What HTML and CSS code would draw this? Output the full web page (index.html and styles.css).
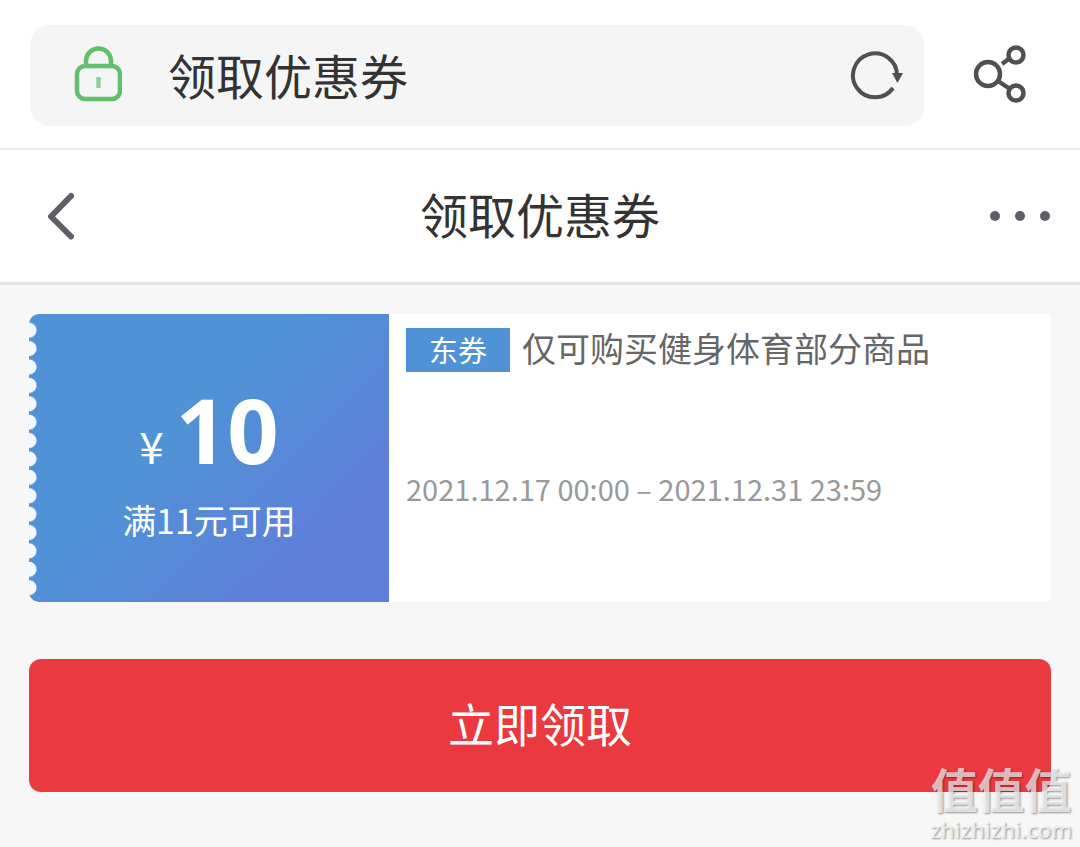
FILE: index.html
```html
<!DOCTYPE html>
<html lang="zh-CN">

<head>
    <meta charset="UTF-8">
    <meta name="viewport" content="width=device-width, initial-scale=1.0">
    <title>领取优惠券</title>
    <link rel="stylesheet" href="styles.css">
</head>

<body>
    <div class="browser-bar">
        <div class="address-box">
            <svg class="lock-icon" width="48" height="58" viewBox="0 0 48 58" fill="none" stroke="#62bf6c" stroke-width="4.5">
                <path d="M12 21V15a12.500 12.500 0 0 1 25 0v6" />
                <rect x="3" y="20" width="43" height="33" rx="8" />
                <path d="M24.500 31v11" stroke="#92cf98" />
            </svg>
            <input class="address-input" type="text" value="领取优惠券" aria-label="地址栏">
            <button class="icon-button" type="button" aria-label="刷新">
                <svg width="56" height="50" viewBox="0 0 56 50" fill="none" stroke="#505050" stroke-width="4">
                    <path d="M47 26A22 22 0 1 0 43 38" />
                    <path d="M42 23h11l-5.500 10z" fill="#505050" stroke="none" />
                </svg>
            </button>
        </div>
        <button class="icon-button share-button" type="button" aria-label="分享">
            <svg width="54" height="60" viewBox="0 0 54 60" fill="none" stroke="#505050" stroke-width="4.5">
                <circle cx="16" cy="30" r="12" />
                <circle cx="44" cy="11" r="7.500" />
                <circle cx="44" cy="49" r="7.500" />
                <path d="M30 20l8-6M26 37l12 8" />
            </svg>
        </button>
    </div>

    <header class="page-header">
        <button class="icon-button back-button" type="button" aria-label="返回">
            <svg width="30" height="50" viewBox="0 0 30 50" fill="none" stroke="#5f5f69" stroke-width="6" stroke-linecap="round" stroke-linejoin="round">
                <path d="M25 5L5 25.500l20 20" />
            </svg>
        </button>
        <h1 class="page-title">领取优惠券</h1>
        <button class="icon-button more-button" type="button" aria-label="更多">
            <svg width="62" height="12" viewBox="0 0 62 12" fill="#5f5f69">
                <circle cx="6" cy="6" r="5" />
                <circle cx="31" cy="6" r="5" />
                <circle cx="56" cy="6" r="5" />
            </svg>
        </button>
    </header>

    <main class="content">
        <section class="coupon">
            <div class="coupon-value">
                <p class="coupon-price"><span class="currency">¥</span><strong class="amount">10</strong></p>
                <p class="coupon-limit">满11元可用</p>
            </div>
            <div class="coupon-info">
                <div class="coupon-heading">
                    <span class="coupon-tag">东券</span>
                    <h2 class="coupon-title">仅可购买健身体育部分商品</h2>
                </div>
                <p class="coupon-date">2021.12.17 00:00 – 2021.12.31 23:59</p>
            </div>
        </section>

        <button class="receive-button" type="button">立即领取</button>
    </main>

    <div class="watermark">
        <span class="watermark-name">值值值</span>
        <span class="watermark-site">zhizhizhi.com</span>
    </div>
</body>

</html>
```

FILE: styles.css
```css
* {
    margin: 0;
    padding: 0;
    box-sizing: border-box;
}

body {
    position: relative;
    min-height: 100vh;
    background-color: #f7f7f7;
    color: #333;
    font-family: "Noto Sans CJK SC", sans-serif;
}

svg {
    display: block;
}

.icon-button {
    background: none;
    border: none;
    cursor: pointer;
}

.browser-bar {
    display: flex;
    align-items: center;
    gap: 48px;
    padding: 25px 54px 22px 30px;
    background-color: #fff;
    border-bottom: 2px solid #ececec;
}

.address-box {
    flex: 1;
    display: flex;
    align-items: center;
    min-width: 0;
    height: 101px;
    padding: 0 18px 2px 44px;
    background-color: #f5f5f5;
    border-radius: 20px;
}

.lock-icon {
    flex-shrink: 0;
}

.address-input {
    flex: 1;
    min-width: 0;
    margin-left: 46px;
    padding-bottom: 2px;
    background: none;
    border: none;
    outline: none;
    color: #333;
    font-family: inherit;
    font-size: 48px;
    line-height: 72px;
}

.share-button {
    padding-bottom: 4px;
}

.page-header {
    display: flex;
    align-items: center;
    justify-content: space-between;
    height: 135px;
    padding: 0 29px 0 46px;
    background-color: #fff;
    border-bottom: 3px solid #e2e2e2;
}

.back-button,
.more-button {
    flex: 1;
    display: flex;
}

.more-button {
    justify-content: flex-end;
}

.page-title {
    padding: 0 17px 6px 0;
    font-size: 48px;
    font-weight: 400;
    line-height: 72px;
}

.content {
    padding: 29px;
}

.coupon {
    display: flex;
    min-height: 288px;
    margin-bottom: 57px;
    background-color: #fff;
    border-radius: 10px 4px 4px 10px;
}

.coupon-value {
    position: relative;
    width: 360px;
    padding-top: 81px;
    background: linear-gradient(135deg, #5092d6 42%, #5f7fda 80%);
    border-radius: 10px 0 0 10px;
    color: #fff;
    text-align: center;
}

/* scalloped ticket edge */
.coupon-value::before {
    content: "";
    position: absolute;
    top: 7px;
    bottom: 5px;
    left: 0;
    width: 8px;
    background-image: radial-gradient(circle at 0 50%, #f3f8fc 7px, transparent 8px);
    background-size: 8px 18px;
    background-repeat: round;
}

.coupon-price {
    line-height: 68px;
}

.currency {
    margin-right: 12px;
    font-size: 44px;
}

.amount {
    font-family: "Noto Sans", sans-serif;
    font-size: 90px;
    font-weight: 700;
}

.coupon-limit {
    margin-top: 3px;
    font-size: 34px;
    line-height: 52px;
}

.coupon-info {
    flex: 1;
    padding: 10px 17px;
}

.coupon-heading {
    display: flex;
    align-items: center;
    gap: 12px;
}

.coupon-tag {
    padding: 0 23px 2px;
    background-color: #5092d6;
    color: #fff;
    font-size: 29px;
    line-height: 42px;
}

.coupon-title {
    padding-bottom: 4px;
    color: #666;
    font-size: 34px;
    font-weight: 400;
    line-height: 48px;
}

.coupon-date {
    margin-top: 90px;
    color: #999;
    font-size: 29px;
    line-height: 44px;
}

.receive-button {
    display: block;
    width: 100%;
    height: 133px;
    padding-bottom: 8px;
    background-color: #ea393f;
    border: none;
    border-radius: 12px;
    color: #fff;
    cursor: pointer;
    font-family: inherit;
    font-size: 46px;
}

.watermark {
    position: absolute;
    right: 8px;
    bottom: 4px;
    color: rgba(255, 255, 255, 0.7);
    text-align: center;
    text-shadow: 1px 1px 2px rgba(0, 0, 0, 0.4);
    pointer-events: none;
}

.watermark-name,
.watermark-site {
    display: block;
}

.watermark-name {
    font-size: 47px;
    font-weight: 700;
    line-height: 54px;
}

.watermark-site {
    font-family: "Noto Sans", sans-serif;
    font-size: 22px;
    font-weight: 500;
    line-height: 28px;
}
```
